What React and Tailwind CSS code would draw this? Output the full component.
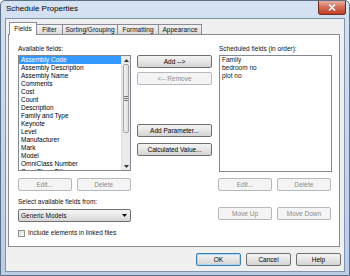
import React from 'react';

const available = [
  'Assembly Code',
  'Assembly Description',
  'Assembly Name',
  'Comments',
  'Cost',
  'Count',
  'Description',
  'Family and Type',
  'Keynote',
  'Level',
  'Manufacturer',
  'Mark',
  'Model',
  'OmniClass Number',
  'OmniClass Title',
];

const scheduled = ['Family', 'bedroom no', 'plot no'];

const tabs = [
  { label: 'Fields', w: 'w-[28px]', active: true },
  { label: 'Filter', w: 'w-[27px]' },
  { label: 'Sorting/Grouping', w: 'w-[56px]' },
  { label: 'Formatting', w: 'w-[42px]' },
  { label: 'Appearance', w: 'w-[44px]' },
];

const Btn = ({ children, disabled, className = '' }) => (
  <div
    className={`h-[13px] flex items-center justify-center rounded-[2px] border ${
      disabled
        ? 'border-[#b5b9bc] bg-[#f4f4f4] text-[#8b8b8b]'
        : 'border-[#707070] bg-gradient-to-b from-[#f4f4f4] via-[#e6e6e6] to-[#d4d4d4] text-black'
    } ${className}`}
  >
    {children}
  </div>
);

const Arrow = ({ up }) => (
  <svg width="5" height="3" viewBox="0 0 5 3">
    {up ? <polygon points="0,3 5,3 2.5,0" fill="#333" /> : <polygon points="0,0 5,0 2.5,3" fill="#333" />}
  </svg>
);

const FieldsList = () => (
  <div className="relative h-[116px] w-[113px] overflow-hidden border border-[#828790] bg-white">
    {available.map((f, i) => (
      <div
        key={f}
        className={`h-[8px] w-[102px] pl-[2px] leading-[8px] whitespace-nowrap ${
          i === 0 ? 'bg-[#3399ff] text-white' : 'text-black'
        }`}
      >
        {f}
      </div>
    ))}
    {/* scrollbar */}
    <div className="absolute right-0 top-0 flex h-full w-[9px] flex-col bg-[#eaeaea] border-l border-[#e0e0e0]">
      <div className="flex h-[8px] items-center justify-center">
        <Arrow up />
      </div>
      <div className="mx-[1px] flex h-[69px] items-center justify-center rounded-[2px] border border-[#a5a5a5] bg-gradient-to-r from-[#f4f4f4] to-[#dedede]">
        <div className="flex flex-col gap-[1px]">
          <div className="h-px w-[4px] bg-[#777]" />
          <div className="h-px w-[4px] bg-[#777]" />
          <div className="h-px w-[4px] bg-[#777]" />
        </div>
      </div>
      <div className="flex-1" />
      <div className="flex h-[8px] items-center justify-center">
        <Arrow />
      </div>
    </div>
  </div>
);

export default function App() {
  return (
    <div className="flex h-[276px] w-[350px] flex-col overflow-hidden rounded-t-[5px] border border-[#5d6f86] bg-gradient-to-b from-[#d4e2f2] via-[#c6d7ec] to-[#b9cde5] font-['Liberation_Sans',Arial,sans-serif] text-[6.5px] text-[#111]">
      {/* title bar */}
      <div className="flex h-[17px] items-start">
        <div className="pl-[5px] pt-[3px] text-[8px] leading-[10px] text-black">Schedule Properties</div>
        <div className="ml-auto mr-[3px] flex h-[14px] w-[28px] items-center justify-center rounded-b-[3px] border border-t-0 border-[#6b2d22] bg-gradient-to-b from-[#e9ada0] via-[#d26a55] to-[#c03c22]">
          <svg width="8" height="7" viewBox="0 0 8 7">
            <path d="M1 0.5 L7 6.5 M7 0.5 L1 6.5" stroke="white" strokeWidth="1.6" />
          </svg>
        </div>
      </div>

      {/* client area */}
      <div className="mx-[4px] mb-[3px] flex flex-1 flex-col border border-[#7f93ad] bg-[#f0f0f0]">
        {/* tabs */}
        <div className="ml-[3px] mt-[3px] flex h-[12px] items-end">
          {tabs.map((t, i) => (
            <div
              key={t.label}
              className={`${t.w} ${i > 0 ? '-ml-px' : ''} flex items-center justify-center whitespace-nowrap border border-b-0 border-[#898c95] ${
                t.active
                  ? 'relative z-10 -mb-px h-[13px] bg-white'
                  : 'h-[10px] bg-gradient-to-b from-[#f2f2f2] to-[#dcdcdc]'
              }`}
            >
              {t.label}
            </div>
          ))}
        </div>

        {/* panel */}
        <div className="ml-[2px] flex h-[213px] w-[332px] border border-[#898c95] bg-white pl-[9px] pt-[8px]">
          {/* left column */}
          <div className="flex w-[113px] flex-col">
            <div className="flex h-[12px] items-center">Available fields:</div>
            <FieldsList />
            <div className="mt-[7px] flex gap-[5px]">
              <Btn disabled className="w-[54px]">Edit...</Btn>
              <Btn disabled className="w-[55px]">Delete</Btn>
            </div>
            <div className="flex h-[18px] items-end pb-[3px] leading-[8px]">Select available fields from:</div>
            <div className="flex h-[13px] items-center justify-between rounded-[2px] border border-[#707070] bg-gradient-to-b from-[#f4f4f4] via-[#e8e8e8] to-[#d6d6d6] pl-[2px] pr-[3px]">
              <span>Generic Models</span>
              <svg width="5" height="3" viewBox="0 0 5 3">
                <polygon points="0,0 5,0 2.5,3" fill="#000" />
              </svg>
            </div>
            <div className="mt-[7px] flex items-center gap-[3px]">
              <div className="h-[7px] w-[7px] border border-[#8e8f8f] bg-gradient-to-br from-[#dcdcdc] to-[#fbfbfb]" />
              <span className="leading-[8px]">Include elements in linked files</span>
            </div>
          </div>

          {/* middle column */}
          <div className="ml-[6px] flex w-[75px] flex-col pt-[12px]">
            <Btn>Add --&gt;</Btn>
            <Btn disabled className="mt-[4px]">&lt;-- Remove</Btn>
            <Btn className="mt-[39px]">Add Parameter...</Btn>
            <Btn className="mt-[6px]">Calculated Value...</Btn>
          </div>

          {/* right column */}
          <div className="ml-[7px] flex w-[113px] flex-col">
            <div className="flex h-[12px] items-center">Scheduled fields (in order):</div>
            <div className="h-[117px] border border-[#828790] bg-white pl-[2px]">
              {scheduled.map((f) => (
                <div key={f} className="h-[8px] leading-[8px]">
                  {f}
                </div>
              ))}
            </div>
            <div className="-ml-px mt-[6px] flex gap-[5px]">
              <Btn disabled className="w-[54px]">Edit...</Btn>
              <Btn disabled className="w-[54px]">Delete</Btn>
            </div>
            <div className="-ml-px mt-[16px] flex gap-[5px]">
              <Btn disabled className="w-[54px]">Move Up</Btn>
              <Btn disabled className="w-[54px]">Move Down</Btn>
            </div>
          </div>
        </div>

        {/* dialog buttons */}
        <div className="mt-[6px] flex justify-end gap-[5px] pr-[3px]">
          <Btn className="w-[45px] !border-[#3c7fb1] shadow-[inset_0_0_0_1px_#a6d8f4]">OK</Btn>
          <Btn className="w-[45px]">Cancel</Btn>
          <Btn className="w-[45px]">Help</Btn>
        </div>
      </div>
    </div>
  );
}
